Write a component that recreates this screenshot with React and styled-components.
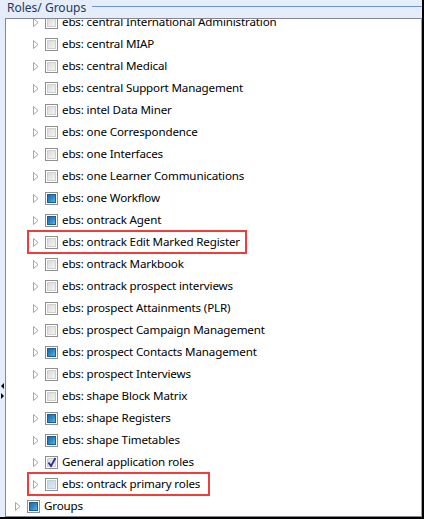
import styled, { createGlobalStyle, css } from 'styled-components';

const GlobalStyle = createGlobalStyle`
  html, body {
    margin: 0;
    padding: 0;
    background: #ffffff;
  }
  body {
    font-family: "Noto Sans", "Open Sans", sans-serif;
  }
`;

const Frame = styled.div`
  width: 424px;
  height: 519px;
  box-sizing: border-box;
  display: flex;
  flex-direction: column;
  background: #e4edf9;
  border-right: 2px solid #000000;
  border-bottom: 2px solid #000000;
  overflow: hidden;
`;

const Header = styled.div`
  height: 18px;
  flex: 0 0 18px;
  display: flex;
  align-items: flex-start;
  gap: 6px;
  padding-left: 7px;
`;

const HeaderTitle = styled.span`
  font-size: 12px;
  line-height: 14px;
  margin-top: 1px;
  color: #1e395b;
  white-space: nowrap;
`;

const HeaderRule = styled.span`
  flex: 1;
  height: 1px;
  margin-top: 6px;
  background: #6d95d3;
`;

const Body = styled.div`
  flex: 1;
  display: flex;
  min-height: 0;
`;

const Splitter = styled.div`
  width: 5px;
  flex: 0 0 5px;
  display: flex;
  flex-direction: column;
  align-items: flex-start;
  gap: 4px;
  padding-top: 365px;
`;

const SplitArrow = styled.span`
  width: 0;
  height: 0;
  margin-left: 1px;
  border-top: 3px solid transparent;
  border-bottom: 3px solid transparent;
  ${({ dir }) =>
    dir === 'left'
      ? css`
          border-right: 3px solid #000000;
        `
      : css`
          border-left: 3px solid #000000;
        `}
`;

const TreeBox = styled.div`
  flex: 1;
  background: #ffffff;
  border: 1px solid #828790;
  border-right: 1px solid #a0a0a0;
  overflow: hidden;
`;

const TreeList = styled.ul`
  list-style: none;
  margin: -8px 0 0 0;
  padding: 0;
`;

const Row = styled.li`
  height: 22px;
  display: flex;
  align-items: center;
  padding-left: ${({ level }) => 9 + level * 18}px;
`;

const RowInner = styled.div`
  position: relative;
  display: inline-flex;
  align-items: center;
  height: 22px;

  ${({ marked, extra }) =>
    marked &&
    css`
      &::after {
        content: '';
        position: absolute;
        left: -6px;
        right: -${extra}px;
        top: -1px;
        bottom: -1px;
        border: 2px solid #ec3f3c;
        pointer-events: none;
      }
    `}
`;

const Expander = styled.svg`
  width: 6px;
  height: 9px;
  margin-right: 6px;
  flex: 0 0 auto;
`;

const CheckBox = styled.span`
  position: relative;
  width: 13px;
  height: 13px;
  box-sizing: border-box;
  border: 1px solid #8e8f8f;
  background: #ffffff;
  display: inline-flex;
  align-items: center;
  justify-content: center;
  flex: 0 0 auto;

  &::before {
    content: '';
    width: 9px;
    height: 9px;
    box-sizing: border-box;
    ${({ state }) =>
      state === 'partial'
        ? css`
            border: 1px solid #1a5d8e;
            background: linear-gradient(135deg, #1d6aa8 0%, #2f8cc9 55%, #5ab8e6 100%);
          `
        : state === 'dim'
        ? css`
            border: 1px solid #bdd0df;
            background: linear-gradient(135deg, #c6d9e7 0%, #dae8f2 100%);
          `
        : css`
            border: 1px solid #d0d0d0;
            background: linear-gradient(135deg, #dadada 0%, #f4f4f4 100%);
          `}
  }
`;

const CheckMark = styled.svg`
  position: absolute;
  left: 1px;
  top: 0px;
  width: 10px;
  height: 11px;
`;

const Label = styled.span`
  margin-left: 4px;
  font-size: 11.6px;
  letter-spacing: -0.15px;
  line-height: 16px;
  color: #000000;
  white-space: nowrap;
`;

const rows = [
  { label: 'ebs: central International Administration' },
  { label: 'ebs: central MIAP' },
  { label: 'ebs: central Medical' },
  { label: 'ebs: central Support Management' },
  { label: 'ebs: intel Data Miner' },
  { label: 'ebs: one Correspondence' },
  { label: 'ebs: one Interfaces' },
  { label: 'ebs: one Learner Communications' },
  { label: 'ebs: one Workflow', state: 'partial' },
  { label: 'ebs: ontrack Agent', state: 'partial' },
  { label: 'ebs: ontrack Edit Marked Register', marked: true, extra: 7 },
  { label: 'ebs: ontrack Markbook' },
  { label: 'ebs: ontrack prospect interviews' },
  { label: 'ebs: prospect Attainments (PLR)' },
  { label: 'ebs: prospect Campaign Management' },
  { label: 'ebs: prospect Contacts Management', state: 'partial' },
  { label: 'ebs: prospect Interviews' },
  { label: 'ebs: shape Block Matrix' },
  { label: 'ebs: shape Registers', state: 'partial' },
  { label: 'ebs: shape Timetables', state: 'partial' },
  { label: 'General application roles', state: 'checked' },
  { label: 'ebs: ontrack primary roles', state: 'dim', marked: true, extra: 10 },
  { label: 'Groups', state: 'partial', level: 0 },
];

function Triangle() {
  return (
    <Expander viewBox="0 0 6 9">
      <path d="M0.5 0.5 L5 4.5 L0.5 8.5 Z" fill="#ffffff" stroke="#a6a6a6" strokeWidth="1" />
    </Expander>
  );
}

function TreeCheck({ state }) {
  return (
    <CheckBox state={state}>
      {state === 'checked' && (
        <CheckMark viewBox="0 0 10 11">
          <path d="M1.5 5.5 L4 9 L8.5 1" fill="none" stroke="#2a2a9e" strokeWidth="1.8" />
        </CheckMark>
      )}
    </CheckBox>
  );
}

export default function App() {
  return (
    <>
      <GlobalStyle />
      <Frame>
        <Header>
          <HeaderTitle>Roles/ Groups</HeaderTitle>
          <HeaderRule />
        </Header>
        <Body>
          <Splitter>
            <SplitArrow dir="left" />
            <SplitArrow dir="right" />
          </Splitter>
          <TreeBox>
            <TreeList>
              {rows.map((row) => (
                <Row key={row.label} level={row.level ?? 1}>
                  <RowInner marked={row.marked} extra={row.extra}>
                    <Triangle />
                    <TreeCheck state={row.state} />
                    <Label>{row.label}</Label>
                  </RowInner>
                </Row>
              ))}
            </TreeList>
          </TreeBox>
        </Body>
      </Frame>
    </>
  );
}
